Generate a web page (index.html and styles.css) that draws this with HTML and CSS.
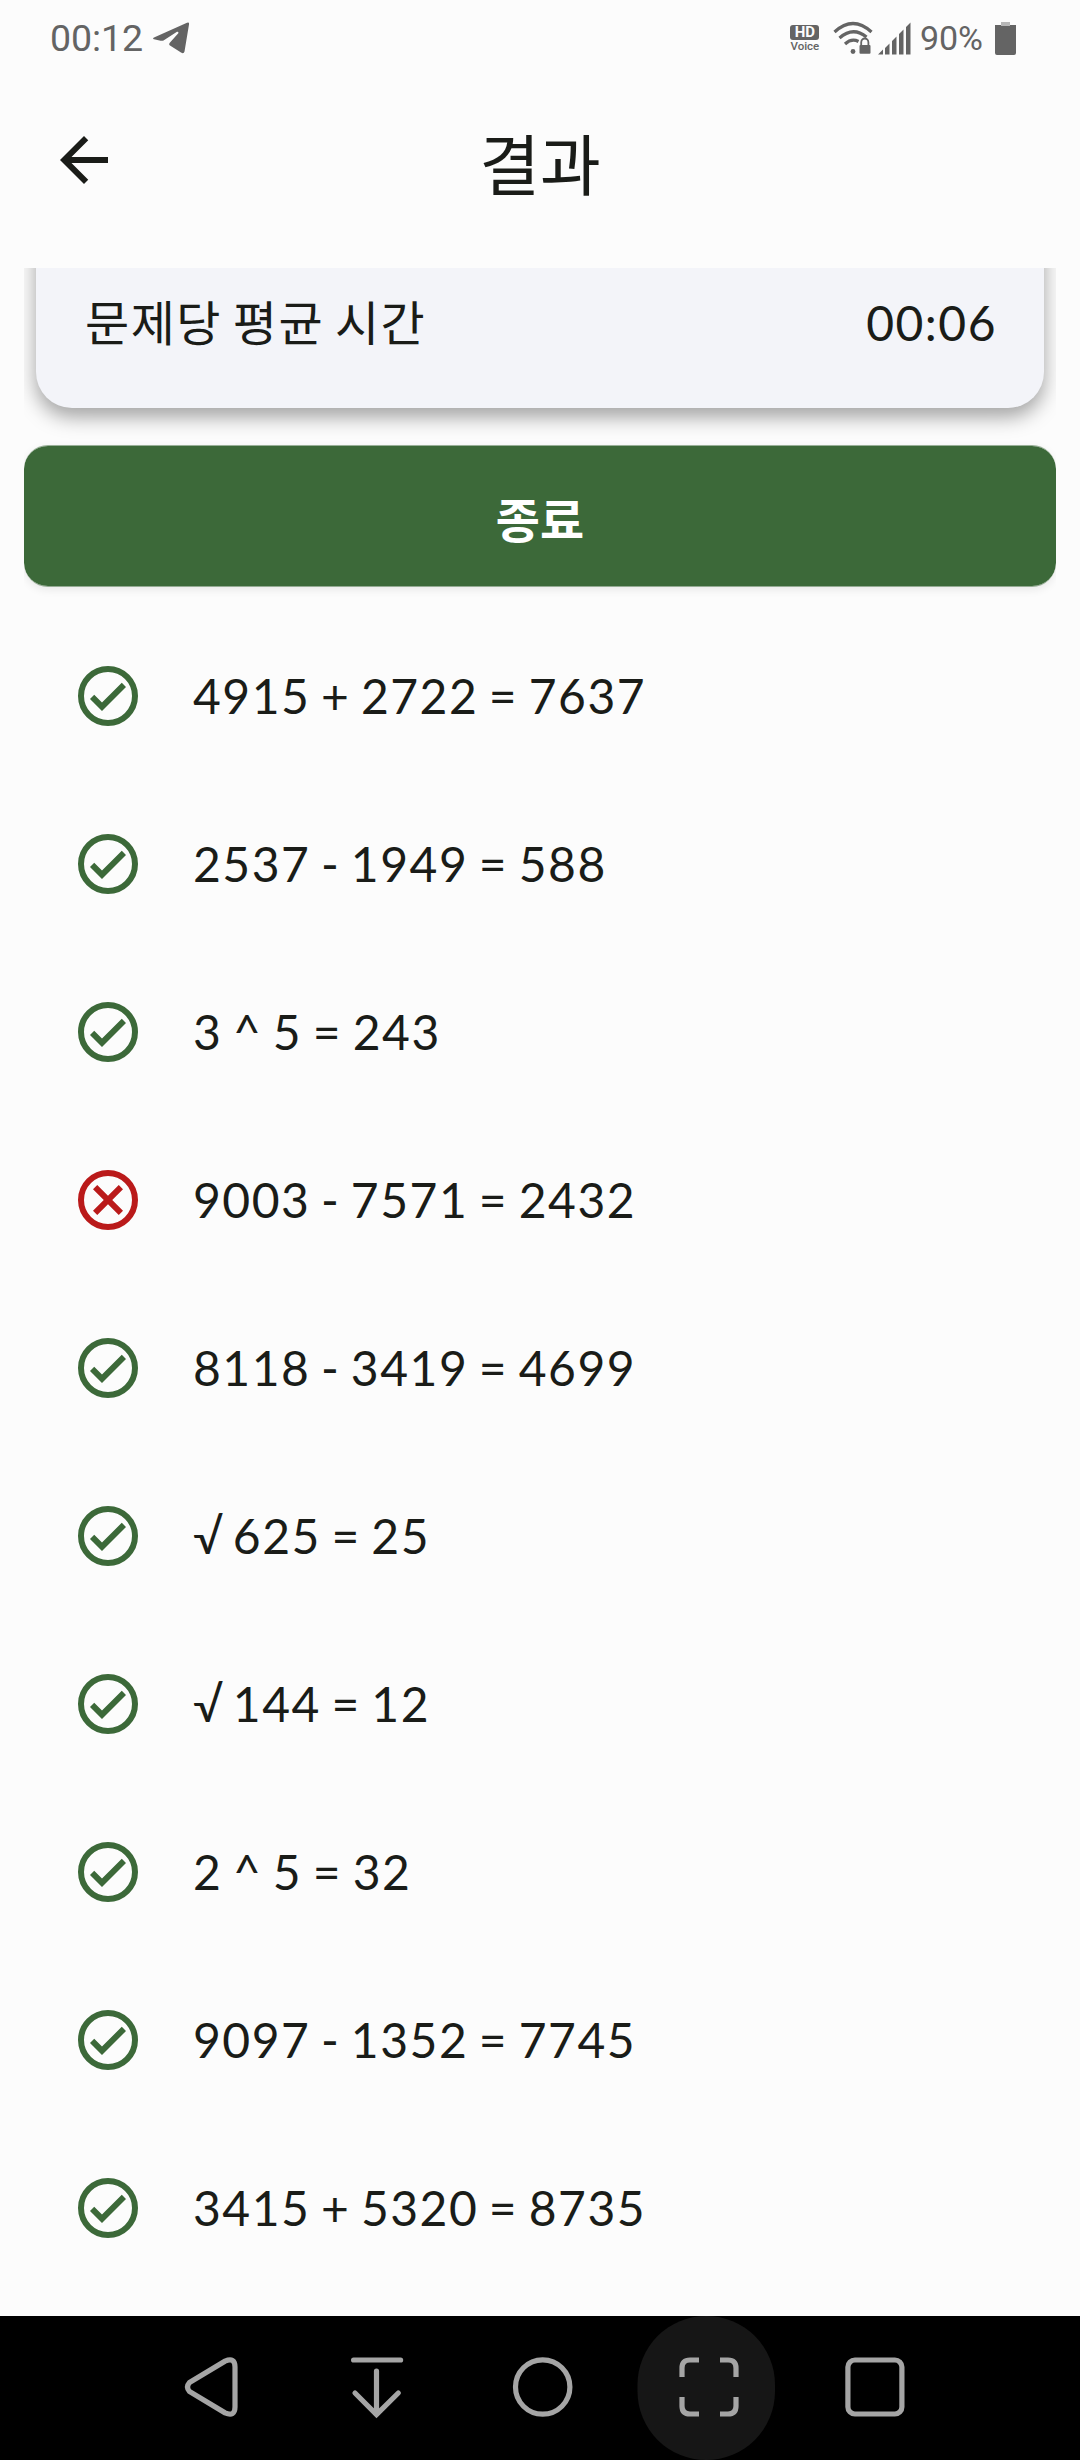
FILE: index.html
```
<!DOCTYPE html>
<html lang="ko">
<head>
  <meta charset="utf-8">
  <title>결과</title>
  <link rel="stylesheet" href="styles.css">
</head>
<body>
  <!-- Shared icons -->
  <svg class="icon-defs">
    <symbol id="check" viewBox="0 0 24 24">
      <circle cx="12" cy="12" r="9" fill="none" stroke="currentColor" stroke-width="2"/>
      <path fill="currentColor" d="M16.59 7.58L10 14.17l-2.59-2.58L6 13l4 4 8-8z"/>
    </symbol>
    <symbol id="cross" viewBox="0 0 24 24">
      <circle cx="12" cy="12" r="9" fill="none" stroke="currentColor" stroke-width="2"/>
      <path fill="currentColor" d="M17 8.41L15.59 7 12 10.59 8.41 7 7 8.41 10.59 12 7 15.59 8.41 17 12 13.41 15.59 17 17 15.59 13.41 12z"/>
    </symbol>
  </svg>

  <div class="status-bar">
    <span class="clock">00:12</span>
    <svg class="telegram" width="38" height="32" viewBox="0 0 38 32">
      <path d="M2 15.500L35 .7Q37.500 -.2 37 2.500L32.500 29.500Q31.800 32.200 29 30.500L18 23.500Q16.500 22.300 17.800 20.800L26.300 11.200Q26.800 9.500 25 9.800L11.500 18.400Q10 19.200 7.500 18.600L2 17.200Q.2 16.400 2 15.500z"/>
    </svg>
    <div class="status-right">
      <div class="hd"><span class="hd-box">HD</span><span class="hd-voice">Voice</span></div>
      <svg class="wifi" width="40" height="34" viewBox="0 0 40 34">
        <g fill="none" stroke="#646464" stroke-width="3.200">
          <path d="M1.500 11Q20 -6 38.500 11"/>
          <path d="M6.500 17Q20 5 33.500 16"/>
          <path d="M12 23Q18.500 17 25.500 20.500"/>
          <path d="M28.200 25v-3.500a3.600 4 0 0 1 7.200 0V25" stroke-width="1.800"/>
        </g>
        <circle cx="20" cy="30.500" r="2.400"/>
        <rect x="26.500" y="24" width="11" height="8.800" rx="1"/>
      </svg>
      <svg class="signal" width="33" height="33" viewBox="0 0 33 33">
        <path d="M0 32.500L5 27.500V32.500zM7 26l4.500-4.500v11H7zM14 19l4.500-4.500v18H14zM21 12l4.500-4.500v25H21zM28 5L32.500 .5v32H28z"/>
      </svg>
      <span class="percent">90%</span>
      <svg class="battery" width="21" height="33" viewBox="0 0 21 33">
        <rect x="6" y="0" width="9" height="4" opacity=".45"/>
        <path d="M0 3h6v1h9V3h6v28q0 2-2 2H2q-2 0-2-2z"/>
      </svg>
    </div>
  </div>

  <header class="app-bar">
    <svg class="back" width="72" height="72" viewBox="0 0 24 24"><path d="M20 11H7.830l5.590-5.590L12 4l-8 8 8 8 1.410-1.410L7.830 13H20v-2z"/></svg>
    <h1>결과</h1>
  </header>

  <main>
    <div class="card">
      <span>문제당 평균 시간</span>
      <span class="time">00:06</span>
    </div>
    <button class="finish-btn">종료</button>
    <ul class="result-list">
      <li><svg class="ok"><use href="#check"/></svg><span>4915 + 2722 = 7637</span></li>
      <li><svg class="ok"><use href="#check"/></svg><span>2537 - 1949 = 588</span></li>
      <li><svg class="ok"><use href="#check"/></svg><span>3 ^ 5 = 243</span></li>
      <li><svg class="wrong"><use href="#cross"/></svg><span>9003 - 7571 = 2432</span></li>
      <li><svg class="ok"><use href="#check"/></svg><span>8118 - 3419 = 4699</span></li>
      <li><svg class="ok"><use href="#check"/></svg><span><b class="root">√</b> 625 = 25</span></li>
      <li><svg class="ok"><use href="#check"/></svg><span><b class="root">√</b> 144 = 12</span></li>
      <li><svg class="ok"><use href="#check"/></svg><span>2 ^ 5 = 32</span></li>
      <li><svg class="ok"><use href="#check"/></svg><span>9097 - 1352 = 7745</span></li>
      <li><svg class="ok"><use href="#check"/></svg><span>3415 + 5320 = 8735</span></li>
    </ul>
  </main>

  <nav class="nav-bar">
    <svg viewBox="0 0 166 144"><path d="M61.500 66.500L97 45.200Q107 41 107 51V91Q107 101 97 96.800L61.500 75.500Q57.500 71 61.500 66.500z"/></svg>
    <svg viewBox="0 0 166 144"><path stroke-linecap="round" d="M59.600 44h47M82.500 55v43M61 77l21.500 21.500L104.300 77"/></svg>
    <svg viewBox="0 0 166 144"><circle cx="82.700" cy="71" r="27.200"/></svg>
    <svg viewBox="0 0 166 144">
      <rect class="pressed" x="11.500" y="0" width="137.500" height="144" rx="68.700"/>
      <path d="M73 44H64q-8 0-8 8v9M94 44h8q8 0 8 8v9M73 98H64q-8 0-8-8v-9M94 98h8q8 0 8-8v-9"/>
    </svg>
    <svg viewBox="0 0 166 144"><rect x="55.900" y="44" width="54" height="54" rx="7"/></svg>
  </nav>
</body>
</html>
```

FILE: styles.css
```
body {
  font-family: Lato, "Noto Sans CJK KR", sans-serif;
  background-color: #fcfcfc;
  color: #1a1c18;
  margin: 0;
  height: 2460px;
  display: flex;
  flex-direction: column;
  overflow: hidden;
}

.icon-defs {
  display: none;
}

/* Status bar */
.status-bar {
  height: 76px;
  box-sizing: border-box;
  padding: 0 64px 0 50px;
  display: flex;
  align-items: center;
  font-family: Roboto, sans-serif;
  color: #646464;
  fill: #646464;
}

.clock {
  font-size: 37.5px;
  letter-spacing: -0.1px;
}

.telegram {
  margin-left: 9px;
}

.status-right {
  margin-left: auto;
  display: flex;
  align-items: center;
}

.hd {
  width: 30px;
  display: flex;
  flex-direction: column;
  align-items: center;
}

.hd-box {
  width: 29px;
  height: 15px;
  line-height: 15px;
  border-radius: 3px;
  background-color: #646464;
  color: #fcfcfc;
  font-size: 15px;
  font-weight: 700;
  text-align: center;
}

.hd-voice {
  font-size: 11.5px;
  font-weight: 500;
  line-height: 12px;
}

.wifi {
  margin-left: 13px;
}

.signal {
  margin-left: 5px;
}

.percent {
  margin-left: 9px;
  font-size: 34px;
}

.battery {
  margin-left: 12px;
}

/* App bar */
.app-bar {
  height: 192px;
  display: grid;
  grid-template-columns: 72px 1fr 72px;
  padding: 0 48px;
}

.back {
  margin-top: 48px;
  fill: #1a1c18;
}

.app-bar h1 {
  margin: 41px 0 0;
  font-size: 66px;
  font-weight: 400;
  line-height: 96px;
  text-align: center;
}

/* Scrolling content */
main {
  flex: 1;
  margin: 0 24px;
  overflow: hidden;
}

/* the top of the card is scrolled under the app bar */
.card {
  height: 240px;
  box-sizing: border-box;
  margin: -100px 12px 0;
  padding: 120px 47px 0 49px;
  display: flex;
  justify-content: space-between;
  background-color: #f3f4f9;
  border-radius: 36px;
  box-shadow: 0 9px 20px rgba(0, 0, 0, 0.36);
  font-size: 48px;
  line-height: 70px;
  letter-spacing: 1.5px;
  word-spacing: -3px;
}

.finish-btn {
  display: block;
  width: 100%;
  height: 142px;
  margin-top: 37px;
  padding: 1px 0 0;
  border: solid rgba(60, 105, 57, 0.5);
  border-width: 1px 0;
  border-radius: 24px;
  background-color: #3c6939;
  background-clip: padding-box;
  box-shadow: 0 3px 8px rgba(0, 0, 0, 0.08);
  color: #ffffff;
  font-family: inherit;
  font-size: 48px;
  font-weight: 700;
}

.result-list {
  list-style-type: none;
  margin: 25px 0 0;
  padding: 0;
}

.result-list li {
  height: 168px;
  padding-left: 48px;
  display: flex;
  align-items: center;
  gap: 49px;
  font-size: 48px;
  letter-spacing: 1.5px;
  word-spacing: -3.2px;
}

.result-list li > span {
  padding-bottom: 2px;
}

.result-list svg {
  width: 72px;
  height: 72px;
}

.root {
  font-weight: 400;
  letter-spacing: -0.8px;
}

.ok {
  color: #3c6939;
}

.wrong {
  color: #ba1a1a;
}

/* Navigation bar */
.nav-bar {
  height: 144px;
  display: flex;
  padding-left: 128px;
  background-color: #000000;
}

.nav-bar svg {
  width: 166px;
  height: 144px;
  fill: none;
  stroke: #a5a5a5;
  stroke-width: 5.2;
}

.nav-bar .pressed {
  fill: #161616;
  stroke: none;
}
```
